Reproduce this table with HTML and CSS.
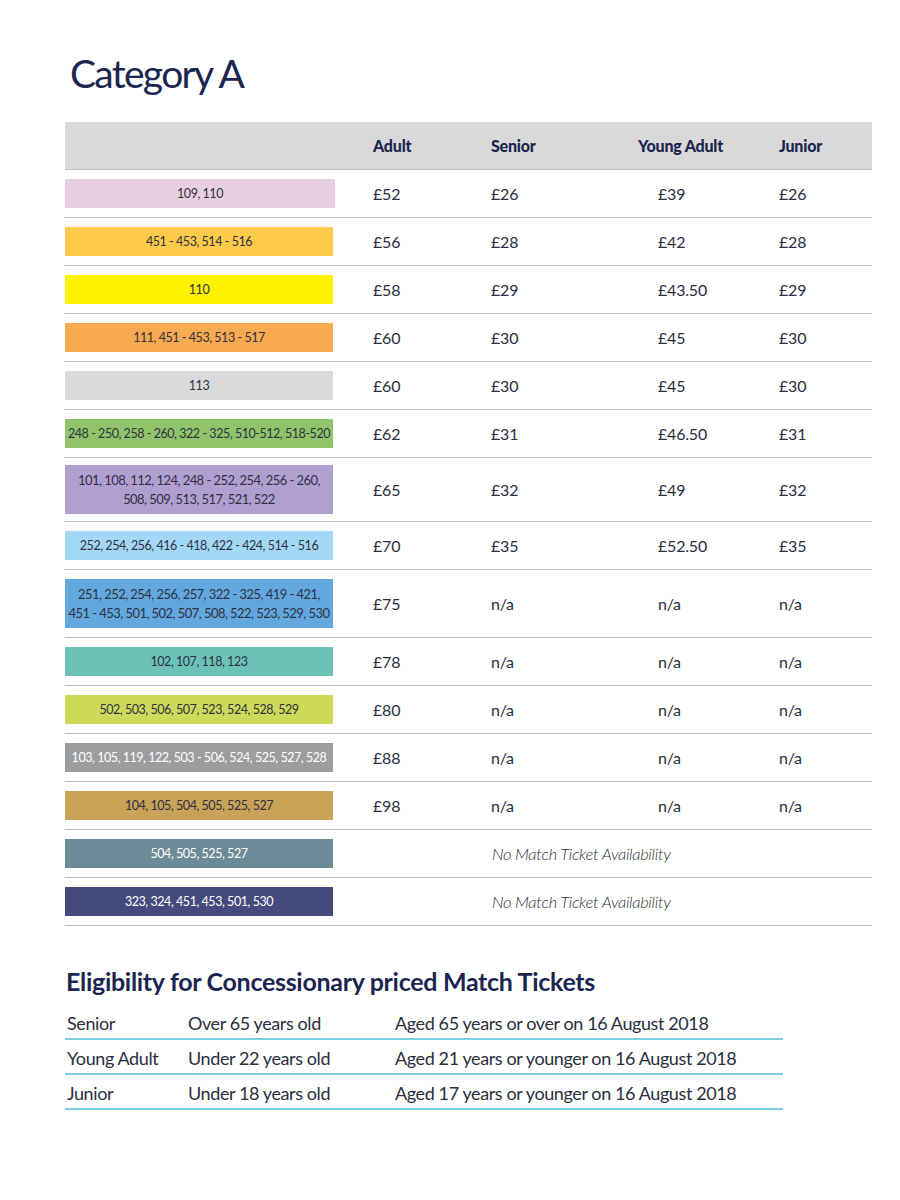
FILE: index.html
```html
<!DOCTYPE html>
<html lang="en">
<head>
<meta charset="utf-8">
<title>Category A</title>
<link rel="stylesheet" href="styles.css">
</head>
<body>
<main class="page">
  <h1 class="title">Category A</h1>

  <div class="prices">
    <div class="row head">
      <div class="zone"></div>
      <div class="cell">Adult</div>
      <div class="cell">Senior</div>
      <div class="cell">Young Adult</div>
      <div class="cell">Junior</div>
    </div>

    <div class="row">
      <div class="zone"><span class="bar c-pink">109, 110</span></div>
      <div class="cell">£52</div><div class="cell">£26</div><div class="cell ya">£39</div><div class="cell">£26</div>
    </div>
    <div class="row">
      <div class="zone"><span class="bar c-amber">451 - 453, 514 - 516</span></div>
      <div class="cell">£56</div><div class="cell">£28</div><div class="cell ya">£42</div><div class="cell">£28</div>
    </div>
    <div class="row">
      <div class="zone"><span class="bar c-yellow">110</span></div>
      <div class="cell">£58</div><div class="cell">£29</div><div class="cell ya">£43.50</div><div class="cell">£29</div>
    </div>
    <div class="row">
      <div class="zone"><span class="bar c-orange">111, 451 - 453, 513 - 517</span></div>
      <div class="cell">£60</div><div class="cell">£30</div><div class="cell ya">£45</div><div class="cell">£30</div>
    </div>
    <div class="row">
      <div class="zone"><span class="bar c-grey">113</span></div>
      <div class="cell">£60</div><div class="cell">£30</div><div class="cell ya">£45</div><div class="cell">£30</div>
    </div>
    <div class="row">
      <div class="zone"><span class="bar c-green">248 - 250, 258 - 260, 322 - 325, 510-512, 518-520</span></div>
      <div class="cell">£62</div><div class="cell">£31</div><div class="cell ya">£46.50</div><div class="cell">£31</div>
    </div>
    <div class="row tall-a">
      <div class="zone"><span class="bar two c-purple">101, 108, 112, 124, 248 - 252, 254, 256 - 260,<br>508, 509, 513, 517, 521, 522</span></div>
      <div class="cell">£65</div><div class="cell">£32</div><div class="cell ya">£49</div><div class="cell">£32</div>
    </div>
    <div class="row">
      <div class="zone"><span class="bar c-sky">252, 254, 256, 416 - 418, 422 - 424, 514 - 516</span></div>
      <div class="cell">£70</div><div class="cell">£35</div><div class="cell ya">£52.50</div><div class="cell">£35</div>
    </div>
    <div class="row">
      <div class="zone"><span class="bar two c-blue">251, 252, 254, 256, 257, 322 - 325, 419 - 421,<br>451 - 453, 501, 502, 507, 508, 522, 523, 529, 530</span></div>
      <div class="cell">£75</div><div class="cell">n/a</div><div class="cell ya">n/a</div><div class="cell">n/a</div>
    </div>
    <div class="row">
      <div class="zone"><span class="bar c-teal">102, 107, 118, 123</span></div>
      <div class="cell">£78</div><div class="cell">n/a</div><div class="cell ya">n/a</div><div class="cell">n/a</div>
    </div>
    <div class="row">
      <div class="zone"><span class="bar c-lime">502, 503, 506, 507, 523, 524, 528, 529</span></div>
      <div class="cell">£80</div><div class="cell">n/a</div><div class="cell ya">n/a</div><div class="cell">n/a</div>
    </div>
    <div class="row">
      <div class="zone"><span class="bar light c-steel">103, 105, 119, 122, 503 - 506, 524, 525, 527, 528</span></div>
      <div class="cell">£88</div><div class="cell">n/a</div><div class="cell ya">n/a</div><div class="cell">n/a</div>
    </div>
    <div class="row">
      <div class="zone"><span class="bar c-tan">104, 105, 504, 505, 525, 527</span></div>
      <div class="cell">£98</div><div class="cell">n/a</div><div class="cell ya">n/a</div><div class="cell">n/a</div>
    </div>
    <div class="row">
      <div class="zone"><span class="bar light c-slate">504, 505, 525, 527</span></div>
      <div class="cell none">No Match Ticket Availability</div>
    </div>
    <div class="row">
      <div class="zone"><span class="bar light c-navy">323, 324, 451, 453, 501, 530</span></div>
      <div class="cell none">No Match Ticket Availability</div>
    </div>
  </div>

  <section class="elig">
    <h2 class="elig-title">Eligibility for Concessionary priced Match Tickets</h2>
    <div class="erow"><span>Senior</span><span>Over 65 years old</span><span>Aged 65 years or over on 16 August 2018</span></div>
    <div class="erow"><span>Young Adult</span><span>Under 22 years old</span><span>Aged 21 years or younger on 16 August 2018</span></div>
    <div class="erow"><span>Junior</span><span>Under 18 years old</span><span>Aged 17 years or younger on 16 August 2018</span></div>
  </section>
</main>
</body>
</html>
```

FILE: styles.css
```css
* { box-sizing: border-box; }

html, body {
  margin: 0;
  padding: 0;
  background: #ffffff;
}

body {
  font-family: Lato, "Open Sans", "Noto Sans", sans-serif;
  color: #2b2e3d;
}

.page {
  width: 900px;
  padding: 48px 0 0 65px;
}

.title {
  margin: 0 0 0 5px;
  font-family: Lato, "Open Sans", sans-serif;
  font-weight: 400;
  font-size: 39px;
  line-height: 50px;
  letter-spacing: -1.7px;
  color: #1b2550;
}

.prices {
  width: 807px;
  margin-top: 24px;
}

.row {
  display: grid;
  grid-template-columns: 308px 118px 147px 141px 93px;
  align-items: center;
  padding: 9px 0;
  border-bottom: 1px solid #bfbfbf;
}

.row.head {
  background: #d9d9d9;
  height: 48px;
  padding: 0;
  border-bottom-width: 1.5px;
}

.row.head .cell {
  font-weight: 900;
  font-size: 16px;
  color: #1b2550;
  letter-spacing: -0.2px;
}

.row.tall-a { padding: 7px 0; }

.zone {
  display: flex;
}

.bar {
  display: flex;
  align-items: center;
  justify-content: center;
  width: 268px;
  min-height: 29px;
  padding: 4px 0;
  text-align: center;
  white-space: nowrap;
  font-size: 12.5px;
  line-height: 18px;
  letter-spacing: -0.45px;
  color: #2f3140;
}

.bar.two {
  min-height: 49px;
  font-size: 13px;
  line-height: 19px;
  letter-spacing: -0.55px;
}

.bar.light { color: #ffffff; }

.cell {
  font-size: 16px;
  font-weight: 400;
  letter-spacing: -0.2px;
  color: #2b2e3d;
}

.cell.ya { padding-left: 20px; }

.cell.none {
  grid-column: 3 / -1;
  padding-left: 1px;
  font-style: italic;
  font-weight: 300;
  font-size: 16.5px;
  letter-spacing: -0.3px;
}

.c-pink   { background: #e7cfe0; width: 270px; }
.c-amber  { background: #fdca49; }
.c-yellow { background: #fff200; }
.c-orange { background: #f7aa50; }
.c-grey   { background: #dadada; }
.c-green  { background: #8fc46b; }
.c-purple { background: #b19fd1; }
.c-sky    { background: #a2d8f6; }
.c-blue   { background: #62a8df; }
.c-teal   { background: #6bc3b8; }
.c-lime   { background: #cdd958; }
.c-steel  { background: #9d9d9d; }
.c-tan    { background: #c9a358; }
.c-slate  { background: #6c8b99; }
.c-navy   { background: #444a7e; }

.elig {
  width: 718px;
  margin-top: 39px;
}

.elig-title {
  margin: 0 0 8px 1px;
  font-size: 25px;
  font-weight: 700;
  line-height: 32px;
  letter-spacing: -0.3px;
  color: #1b2550;
}

.erow {
  display: grid;
  grid-template-columns: 123px 207px 1fr;
  height: 35px;
  align-items: center;
  padding-top: 2px;
  border-bottom: 2px solid #7ccde2;
  font-size: 18px;
  font-weight: 400;
  letter-spacing: -0.4px;
  color: #2b2e3d;
}

.erow span:first-child { padding-left: 2px; }
```
